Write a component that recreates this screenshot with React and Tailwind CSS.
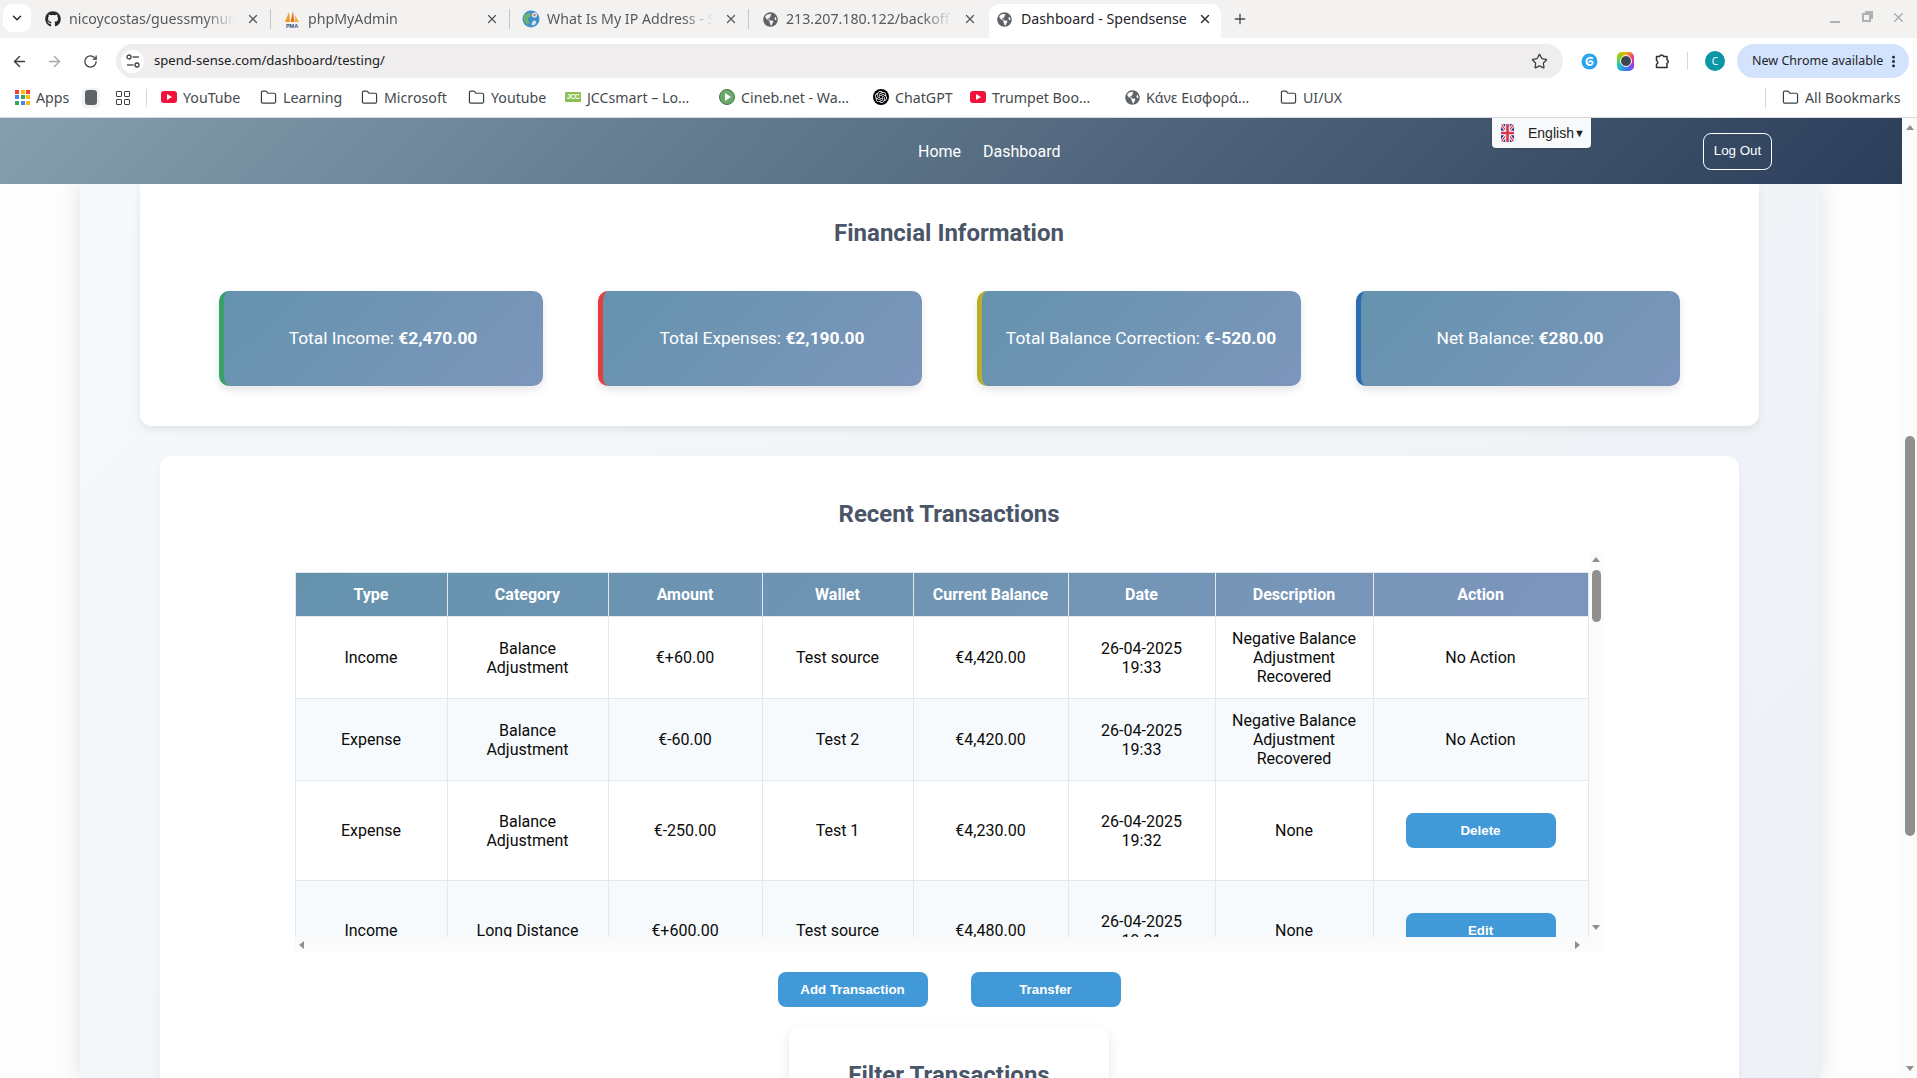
import React from "react";
import { FaGithub, FaGlobeAmericas } from "react-icons/fa";
import { SiOpenai } from "react-icons/si";
import { ArrowLeft, ArrowRight, RotateCw, Star, Folder, X, Plus, ChevronDown, EllipsisVertical } from "lucide-react";

const ui = "font-['Noto_Sans',sans-serif]";

function Tune() {
  return (
    <svg width="14" height="14" viewBox="0 0 14 14" fill="none" stroke="#3c4043" strokeWidth="1.3">
      <circle cx="3" cy="3" r="2" />
      <path d="M6.5 3H13" />
      <circle cx="11" cy="11" r="2" />
      <path d="M1 11h6.5" />
    </svg>
  );
}

function Pma() {
  return (
    <svg width="18" height="18" viewBox="0 0 18 18">
      <path d="M2 12 6 2l1 10z" fill="#f29b1d" />
      <path d="M7.5 12 10 1l1.5 11z" fill="#e8741a" />
      <path d="M12 12 12 5l4 7z" fill="#f4b042" />
      <text x="9" y="17.5" textAnchor="middle" fontSize="5.5" fontWeight="700" fill="#2c4a82" fontFamily="Liberation Sans">PMA</text>
    </svg>
  );
}

function ColorGlobe() {
  return (
    <svg width="18" height="18" viewBox="0 0 18 18">
      <circle cx="9" cy="9" r="8.5" fill="#3f8fc9" />
      <path d="M4 4c3-2 5-1 5 1s-3 2-3 4 2 3 1 5-4-1-5-4 0-5 2-6z" fill="#6fb36b" />
      <circle cx="12.5" cy="5" r="2.6" fill="#dfe9f2" />
      <circle cx="12.5" cy="5" r="1.2" fill="#d66b5f" />
      <path d="M11 11c2-1 4 0 3 2s-3 3-4 2 0-3 1-4z" fill="#cfe3f2" />
    </svg>
  );
}

function PuzzleIcon() {
  return (
    <svg className="ml-[19px]" width="18" height="18" viewBox="0 0 18 18" fill="none" stroke="#2c2f33" strokeWidth="1.5" strokeLinejoin="round">
      <path d="M3.5 4.5H6.6a2.1 2.1 0 0 1 4 0H14v3.2a1.9 1.9 0 0 1 0 3.6V15.5H3.5v-3.3a1.9 1.9 0 0 0 0-3.6z" />
    </svg>
  );
}

function Tab({ icon, title, active, last }) {
  if (active) {
    return (
      <div className="ml-px w-[232px] h-[34px] bg-white rounded-t-[10px] flex items-center pl-[7px] pr-[8px] pb-[4px] gap-[9px] text-[#1f2328] shrink-0">
        <span className="w-[16px] flex justify-center">{icon}</span>
        <span className="flex-1 whitespace-nowrap">{title}</span>
        <X size={14} strokeWidth={2.4} className="text-[#2c2f33] mr-px" />
      </div>
    );
  }
  return (
    <div className="w-[239px] h-[34px] flex items-center pl-[12px] pr-[11px] pb-[4px] gap-[7px] text-[#55595e] shrink-0 relative">
      <span className="w-[18px] flex justify-center">{icon}</span>
      <span className="w-[166px] whitespace-nowrap overflow-hidden [mask-image:linear-gradient(90deg,#000_82%,transparent)]">{title}</span>
      <X size={14} strokeWidth={2.2} className="text-[#55595e] ml-auto" />
      {!last && <span className="absolute right-0 top-[5px] h-[20px] w-px bg-[#c4c7c9]" />}
    </div>
  );
}

function Yt() {
  return (
    <span className="w-[16px] h-[12px] rounded-[3px] bg-[#f0143c] flex items-center justify-center">
      <span className="border-l-[5px] border-l-white border-y-[3px] border-y-transparent" />
    </span>
  );
}

function Fold() {
  return <Folder size={17} strokeWidth={1.7} className="text-[#3c4043]" />;
}

function Bm({ w, icon, children }) {
  return (
    <div className={`flex items-center gap-[6px] shrink-0 ${w}`}>
      {icon}
      <span className="whitespace-nowrap">{children}</span>
    </div>
  );
}

function Chrome() {
  const globe = <FaGlobeAmericas size={15} className="text-[#5f6368]" />;
  return (
    <div className={`${ui} shrink-0`}>
      <div className="h-[38px] bg-[#f3f2f1] flex items-start pt-[4px] text-[14.2px]">
        <div className="ml-[3px] w-[28px] h-[28px] rounded-[9px] bg-white flex items-center justify-center shrink-0">
          <ChevronDown size={14} strokeWidth={2.6} className="text-[#2c2f33]" />
        </div>
        <div className="flex ml-px">
          <Tab icon={<FaGithub size={16} className="text-[#24292e]" />} title="nicoycostas/guessmynum" />
          <Tab icon={<Pma />} title="phpMyAdmin" />
          <Tab icon={<ColorGlobe />} title="What Is My IP Address - S" />
          <Tab icon={globe} title="213.207.180.122/backoff" last />
          <Tab active icon={globe} title="Dashboard - Spendsense" />
        </div>
        <Plus size={16} strokeWidth={2} className="ml-[11px] mt-[7px] text-[#45494e]" />
        <div className="ml-auto mr-[11px] mt-[6px] flex items-center text-[#a9a9a9]">
          <span className="w-[10px] h-[2px] bg-[#b0b0b0] mt-[8px]" />
          <span className="relative ml-[22px] w-[9px] h-[9px] border-[2px] border-[#b0b0b0]">
            <span className="absolute -top-[4px] -right-[4px] w-[8px] h-[8px] border-[2px] border-b-0 border-l-0 border-[#b0b0b0]" />
          </span>
          <X size={15} strokeWidth={2.2} className="ml-[20px] text-[#a9a9a9]" />
        </div>
      </div>
      <div className="h-[40px] bg-white rounded-t-[8px] flex items-center pt-[6px] pr-[7px] text-[13px]">
        <ArrowLeft size={17} strokeWidth={2} className="ml-[11px] text-[#3c4043]" />
        <ArrowRight size={17} strokeWidth={2} className="ml-[18px] text-[#a6a8ab]" />
        <RotateCw size={15} strokeWidth={2} className="ml-[20px] text-[#3c4043]" />
        <div className="ml-[18px] w-[1447px] h-[34px] rounded-full bg-[#efedee] flex items-center pl-[5px] shrink-0">
          <span className="w-[23px] h-[23px] rounded-full bg-white flex items-center justify-center">
            <Tune />
          </span>
          <span className="ml-[10px] text-[#202124] text-[13.1px]">spend-sense.com/dashboard/testing/</span>
          <Star size={17} strokeWidth={1.8} className="ml-auto mr-[15px] text-[#3c4043]" />
        </div>
        <svg className="ml-[18px]" width="17" height="17" viewBox="0 0 17 17">
          <circle cx="8.5" cy="8.5" r="8" fill="#2aa4ee" />
          <path d="M12 5.5C9 3.5 5 5.5 5.5 9s5 4 6 1.5-3-3.5-3.5-1" fill="none" stroke="#fff" strokeWidth="1.8" />
        </svg>
        <span className="ml-[19px] w-[17px] h-[19px] rounded-[5px] bg-[conic-gradient(#f4b400,#ee3b7a,#8b3ff0,#2f86f5,#22c7b8,#7ed321,#f4b400)] flex items-center justify-center">
          <span className="w-[10px] h-[10px] rounded-full bg-[#3d4650] border border-white box-content" />
        </span>
        <PuzzleIcon />
        <span className="ml-[16px] w-px h-[18px] bg-[#d8d8d8]" />
        <span className="ml-[17px] w-[20px] h-[20px] rounded-full bg-[#0b97a7] text-white text-[10px] flex items-center justify-center">C</span>
        <div className="ml-[12px] w-[172px] h-[34px] rounded-full bg-[#d3e3fd] flex items-center pl-[15px] text-[#1f2328] text-[12.5px] shrink-0">
          <span className="whitespace-nowrap">New Chrome available</span>
          <EllipsisVertical size={15} strokeWidth={2.6} className="ml-auto mr-[8px]" />
        </div>
      </div>
      <div className="h-[40px] bg-white border-b border-[#d8d8d8] flex items-center pl-[15px] text-[#45494e] text-[14.2px]">
        <Bm w="w-[67px]" icon={
          <span className="grid grid-cols-3 gap-[1.5px] w-[15px]">
            {["#ea4335","#fbbc04","#ea4335","#4285f4","#34a853","#fbbc04","#34a853","#4285f4","#fbbc04"].map((c, i) => (
              <span key={i} className="w-[4px] h-[4px]" style={{ background: c }} />
            ))}
          </span>
        }>Apps</Bm>
        <span className="w-[18px] h-[20px] rounded-[4px] bg-[#f1f3f4] flex items-center justify-center shrink-0">
          <span className="w-[12px] h-[15px] rounded-[3px] bg-[#5f6368]" />
        </span>
        <span className="ml-[16px] grid grid-cols-2 gap-[2px] w-[14px] shrink-0">
          {[0, 1, 2, 3].map((i) => <span key={i} className="w-[6px] h-[6px] border-[1.5px] border-[#3c4043] rounded-[1px]" />)}
        </span>
        <span className="ml-[16px] w-px h-[18px] bg-[#d8d8d8] mr-[14px] shrink-0" />
        <Bm w="w-[99px]" icon={<Yt />}>YouTube</Bm>
        <Bm w="w-[101px]" icon={<Fold />}>Learning</Bm>
        <Bm w="w-[107px]" icon={<Fold />}>Microsoft</Bm>
        <Bm w="w-[97px]" icon={<Fold />}>Youtube</Bm>
        <Bm w="w-[154px]" icon={
          <span className="w-[16px] h-[10px] bg-[#8cc152] rounded-[1px] text-[7px] font-bold leading-[10px] text-center text-white tracking-[-0.5px] font-['Liberation_Sans',sans-serif]">JCC</span>
        }>JCCsmart – Lo…</Bm>
        <Bm w="w-[154px]" icon={
          <span className="w-[16px] h-[16px] rounded-full bg-[#6da86b] border border-[#3f7a3e] flex items-center justify-center">
            <span className="border-l-[6px] border-l-white border-y-[4px] border-y-transparent ml-[1px]" />
          </span>
        }>Cineb.net - Wa…</Bm>
        <Bm w="w-[97px]" icon={
          <span className="w-[16px] h-[16px] rounded-full bg-black flex items-center justify-center">
            <SiOpenai size={12} className="text-white" />
          </span>
        }>ChatGPT</Bm>
        <Bm w="w-[155px]" icon={<Yt />}>Trumpet Boo…</Bm>
        <Bm w="w-[155px]" icon={globe}>Κάνε Εισφορά…</Bm>
        <Bm w="w-[70px]" icon={<Fold />}>UI/UX</Bm>
        <span className="ml-auto w-px h-[20px] bg-[#d8d8d8] shrink-0" />
        <Bm w="w-[151px] pl-[16px]" icon={<Fold />}>All Bookmarks</Bm>
      </div>
    </div>
  );
}

function Flag() {
  return (
    <svg width="13" height="18" viewBox="0 0 13 18" className="rounded-[3px]">
      <rect width="13" height="18" fill="#2b3a8f" />
      <path d="M0 0l13 18M13 0 0 18" stroke="#fff" strokeWidth="3" />
      <path d="M0 0l13 18M13 0 0 18" stroke="#d9344a" strokeWidth="1.2" />
      <path d="M6.5 0v18M0 9h13" stroke="#fff" strokeWidth="4.5" />
      <path d="M6.5 0v18M0 9h13" stroke="#d9344a" strokeWidth="2.6" />
    </svg>
  );
}

function Nav() {
  return (
    <div className="relative z-10 h-[66px] shrink-0 bg-[linear-gradient(135deg,#859fae,#2c3e5a)] flex items-center pl-[918px] pr-[130px] font-['Roboto',sans-serif] text-white">
      <a className="mt-px">Home</a>
      <a className="mt-px ml-[22px]">Dashboard</a>
      <button className="ml-auto w-[69px] h-[37px] border border-white rounded-[8px] text-[13.33px] font-['Liberation_Sans',sans-serif]">Log Out</button>
      <div className="absolute top-0 left-[1492px] w-[99px] h-[30px] bg-[#f8f9fa] rounded-b-[4px] shadow-sm flex items-center pl-[9px] text-[#222] text-[14px] font-['Liberation_Sans',sans-serif]">
        <Flag />
        <span className="ml-[14px]">English</span>
        <span className="text-[11px]">▼</span>
      </div>
    </div>
  );
}

const stats = [
  { label: "Total Income:", v: "€2,470.00", c: "border-l-[#38a169]" },
  { label: "Total Expenses:", v: "€2,190.00", c: "border-l-[#e53e3e]" },
  { label: "Total Balance Correction:", v: "€-520.00", c: "border-l-[#b7ae2a]" },
  { label: "Net Balance:", v: "€280.00", c: "border-l-[#2b6cb0]" },
];

const rows = [
  ["Income", "Balance Adjustment", "€+60.00", "Test source", "€4,420.00", "26-04-2025 19:33", "Negative Balance Adjustment Recovered", null],
  ["Expense", "Balance Adjustment", "€-60.00", "Test 2", "€4,420.00", "26-04-2025 19:33", "Negative Balance Adjustment Recovered", null],
  ["Expense", "Balance Adjustment", "€-250.00", "Test 1", "€4,230.00", "26-04-2025 19:32", "None", "Delete"],
  ["Income", "Long Distance", "€+600.00", "Test source", "€4,480.00", "26-04-2025 19:31", "None", "Edit"],
];

const heads = ["Type", "Category", "Amount", "Wallet", "Current Balance", "Date", "Description", "Action"];

function Btn({ children, className = "" }) {
  return (
    <button className={`w-[150px] h-[35px] rounded-[8px] bg-[#4299d8] text-white font-bold text-[13.33px] font-['Liberation_Sans',sans-serif] ${className}`}>
      {children}
    </button>
  );
}

function Tri({ dir, className = "" }) {
  const map = {
    up: "border-x-[4px] border-x-transparent border-b-[5px] border-b-[#8f8f8f]",
    down: "border-x-[4px] border-x-transparent border-t-[5px] border-t-[#8f8f8f]",
    left: "border-y-[4px] border-y-transparent border-r-[5px] border-r-[#8f8f8f]",
    right: "border-y-[4px] border-y-transparent border-l-[5px] border-l-[#8f8f8f]",
  };
  return <span className={`block ${map[dir]} ${className}`} />;
}

function TableBox() {
  return (
    <div className="w-[1309px] h-[400px] mx-auto mt-[24px] flex flex-col">
      <div className="h-[385px] flex">
        <div className="w-[1294px] h-[385px] overflow-hidden pt-[20px]">
          <table className="w-[1293px] table-fixed border-collapse text-[16px] leading-[19px] text-center text-[#0a0a0a]">
            <colgroup>
              <col className="w-[152px]" />
              <col className="w-[161px]" />
              <col className="w-[154px]" />
              <col className="w-[151px]" />
              <col className="w-[155px]" />
              <col className="w-[147px]" />
              <col className="w-[158px]" />
              <col className="w-[215px]" />
            </colgroup>
            <thead>
              <tr className="bg-[linear-gradient(135deg,#6593ae,#7c96bb)]">
                {heads.map((h) => (
                  <th key={h} className="border border-[#e2e8f0] px-[15px] py-[12px] text-white font-bold">{h}</th>
                ))}
              </tr>
            </thead>
            <tbody>
              {rows.map((r, i) => (
                <tr key={i} className={i % 2 ? "bg-[#f7fafc]" : "bg-white"}>
                  {r.map((c, j) => (
                    <td key={j} className="border border-[#e2e8f0] px-[15px] py-[12px] align-middle">
                      {j === 7 ? (c ? <Btn className="block mx-auto my-[20px]">{c}</Btn> : "No Action") : c}
                    </td>
                  ))}
                </tr>
              ))}
            </tbody>
          </table>
        </div>
        <div className="w-[15px] h-[385px] bg-[#fbfbfb] flex flex-col items-center pt-[5px]">
          <Tri dir="up" />
          <span className="block w-[9px] h-[52px] mt-[8px] rounded-full bg-[#8f8f8f]" />
          <Tri dir="down" className="mt-auto mb-[7px]" />
        </div>
      </div>
      <div className="h-[15px] bg-[#fbfbfb] flex items-center justify-between pl-[4px] pr-[24px]">
        <Tri dir="left" />
        <Tri dir="right" />
      </div>
    </div>
  );
}

function Content() {
  return (
    <div className="flex-1 min-h-0 overflow-hidden ml-[80px] mr-[82px] pr-[2px] bg-[linear-gradient(135deg,#f6f9fb,#edf1f6)] shadow-[0_0_20px_rgba(0,0,0,0.12)] flex flex-col items-center font-['Roboto',sans-serif]">
      <section className="w-[1619px] shrink-0 bg-white rounded-b-[12px] shadow-[0_4px_8px_rgba(0,0,0,0.08)] pt-[35px] pb-[40px] px-[79px]">
        <h2 className="text-[24px] leading-[28px] font-bold text-center text-[#4a5568]">Financial Information</h2>
        <div className="mt-[44px] flex justify-between">
          {stats.map((s) => (
            <div key={s.label} className={`w-[324px] h-[95px] rounded-[10px] border-l-[5px] ${s.c} bg-[linear-gradient(135deg,#6593ae,#7c96bb)] shadow-[0_4px_8px_rgba(0,0,0,0.1)] flex items-center justify-center text-white text-[17.4px]`}>
              <span>{s.label} <b className="font-bold">{s.v}</b></span>
            </div>
          ))}
        </div>
      </section>
      <section className="w-[1579px] shrink-0 mt-[30px] bg-white rounded-t-[12px] pt-[44px] flex flex-col items-center shadow-[0_4px_8px_rgba(0,0,0,0.05)]">
        <h2 className="text-[24px] leading-[28px] font-bold text-center text-[#4a5568]">Recent Transactions</h2>
        <TableBox />
        <div className="mt-[20px] flex gap-[43px]">
          <Btn>Add Transaction</Btn>
          <Btn>Transfer</Btn>
        </div>
        <div className="mt-[20px] w-[320px] h-[120px] shrink-0 rounded-[12px] bg-white shadow-[0_4px_12px_rgba(0,0,0,0.1)] pt-[34px]">
          <h3 className="text-[24px] leading-[28px] font-bold text-center text-[#4a5568]">Filter Transactions</h3>
        </div>
      </section>
    </div>
  );
}

export default function App() {
  return (
    <div className="h-screen overflow-hidden flex flex-col bg-white">
      <Chrome />
      <div className="flex-1 min-h-0 flex">
        <main className="flex-1 min-w-0 flex flex-col bg-[#fdfdfd]">
          <Nav />
          <Content />
        </main>
        <div className="w-[15px] shrink-0 bg-[#fbfbfb] flex flex-col items-center pt-[7px]">
          <Tri dir="up" />
          <span className="block w-[10px] h-[400px] mt-[306px] rounded-full bg-[#8f8f8f]" />
          <Tri dir="down" className="mt-auto mb-[7px]" />
        </div>
      </div>
    </div>
  );
}
